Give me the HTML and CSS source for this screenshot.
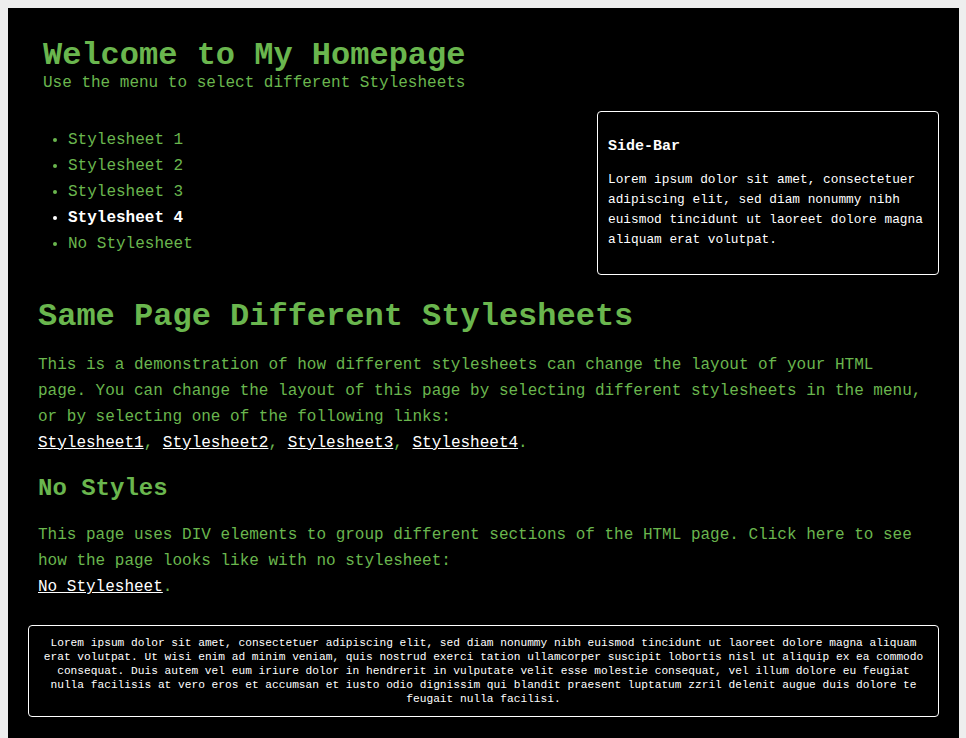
FILE: index.html
```html
<!DOCTYPE html>
<html lang="en">
<head>
<meta charset="utf-8">
<title>Welcome to My Homepage</title>
<link rel="stylesheet" href="styles.css">
</head>
<body>
<div class="page">
  <div class="header">
    <h1 class="title">Welcome to My Homepage</h1>
    <p class="subtitle">Use the menu to select different Stylesheets</p>
  </div>
  <div class="row">
    <ul class="menu">
      <li><a href="#">Stylesheet 1</a></li>
      <li><a href="#">Stylesheet 2</a></li>
      <li><a href="#">Stylesheet 3</a></li>
      <li class="current"><a href="#">Stylesheet 4</a></li>
      <li><a href="#">No Stylesheet</a></li>
    </ul>
    <div class="sidebar">
      <h3 class="side-title">Side-Bar</h3>
      <p class="side-text">Lorem ipsum dolor sit amet, consectetuer adipiscing elit, sed diam nonummy nibh euismod tincidunt ut laoreet dolore magna aliquam erat volutpat.</p>
    </div>
  </div>
  <div class="main">
    <h2 class="main-title">Same Page Different Stylesheets</h2>
    <p class="text">This is a demonstration of how different stylesheets can change the layout of your HTML page. You can change the layout of this page by selecting different stylesheets in the menu, or by selecting one of the following links:<br><a href="#">Stylesheet1</a>, <a href="#">Stylesheet2</a>, <a href="#">Stylesheet3</a>, <a href="#">Stylesheet4</a>.</p>
    <h2 class="sub-title">No Styles</h2>
    <p class="text text-second">This page uses DIV elements to group different sections of the HTML page. Click here to see how the page looks like with no stylesheet:<br><a href="#">No Stylesheet</a>.</p>
  </div>
  <div class="footer">
    <p class="footer-text">Lorem ipsum dolor sit amet, consectetuer adipiscing elit, sed diam nonummy nibh euismod tincidunt ut laoreet dolore magna aliquam erat volutpat. Ut wisi enim ad minim veniam, quis nostrud exerci tation ullamcorper suscipit lobortis nisl ut aliquip ex ea commodo consequat. Duis autem vel eum iriure dolor in hendrerit in vulputate velit esse molestie consequat, vel illum dolore eu feugiat nulla facilisis at vero eros et accumsan et iusto odio dignissim qui blandit praesent luptatum zzril delenit augue duis dolore te feugait nulla facilisi.</p>
  </div>
</div>
</body>
</html>
```
FILE: styles.css
```css
html {
  background: #eeeeee;
}
body {
  margin: 8px 7px 8px 8px;
  background: #eeeeee;
  font-family: "Liberation Mono", "Courier New", monospace;
  color: #6ab64e;
}
.page {
  background: #000000;
  padding: 20px 20px 40px 20px;
}
.header {
  padding: 9px 15px 0 15px;
}
.title {
  margin: 0;
  font-size: 32px;
  font-weight: bold;
  line-height: normal;
  color: #6ab64e;
}
.subtitle {
  margin: 0;
  font-size: 16px;
  line-height: normal;
}
.row {
  display: flex;
  justify-content: space-between;
  align-items: flex-start;
  margin-top: 19px;
}
.menu {
  margin: 15.6px 0 0 0;
  padding-left: 40px;
  font-size: 16px;
  line-height: 26px;
}
.menu li {
  color: #6ab64e;
}
.menu a {
  color: #6ab64e;
  text-decoration: none;
}
.menu .current,
.menu .current a {
  color: #ffffff;
  font-weight: bold;
}
.sidebar {
  width: 320px;
  border: 1px solid #ffffff;
  border-radius: 4px;
  padding: 11px 10px 11px 10px;
  color: #ffffff;
  font-size: 12.8px;
}
.side-title {
  margin: 15px 0 15px 0;
  font-size: 15px;
  line-height: normal;
  font-weight: bold;
}
.side-text {
  margin: 0 0 12.8px 0;
  line-height: 20px;
}
.main {
  padding: 0 10px;
}
.main-title {
  margin: 23px 0 0 0;
  font-size: 32px;
  font-weight: bold;
  line-height: normal;
}
.sub-title {
  margin: 19.5px 0 0 0;
  font-size: 24px;
  font-weight: bold;
  line-height: normal;
}
.text {
  margin: 17px 0 0 0;
  font-size: 16px;
  line-height: 26px;
}
.text-second {
  margin-top: 20px;
}
.text a {
  color: #ffffff;
  text-decoration: underline;
}
.footer {
  margin-top: 24.6px;
  border: 1px solid #ffffff;
  border-radius: 4px;
  padding: 10px;
  color: #ffffff;
}
.footer-text {
  margin: 0;
  font-size: 11.2px;
  line-height: 14px;
  text-align: center;
}
```
